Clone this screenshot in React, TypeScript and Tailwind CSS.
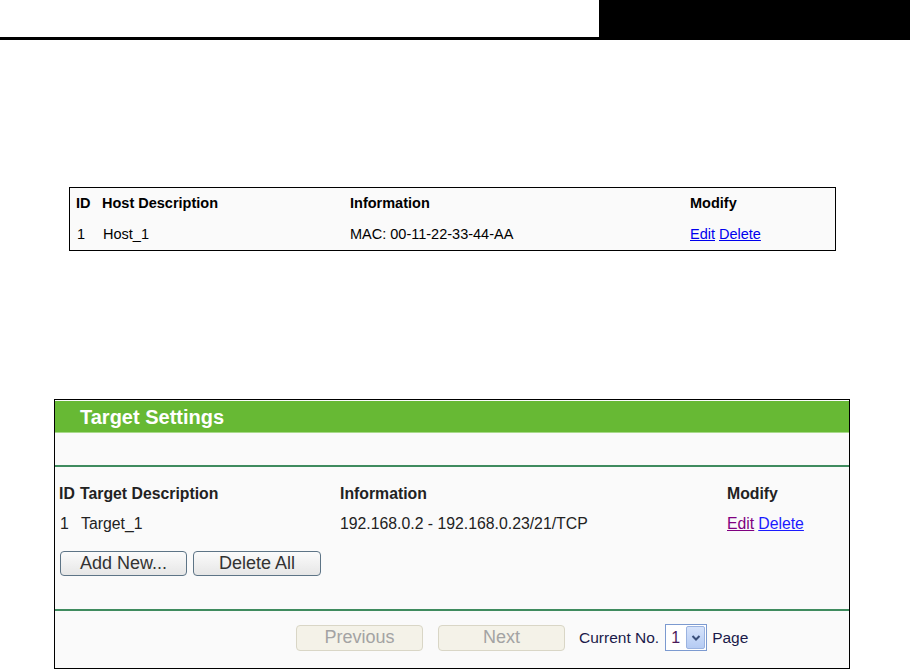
import React from "react";

const font = { fontFamily: '"Liberation Sans", Arial, sans-serif' };

function Chevron() {
  return (
    <svg width="10" height="8" viewBox="0 0 10 8">
      <path d="M1.5 2 L5 5.5 L8.5 2" fill="none" stroke="#3a4f7a" strokeWidth="2" />
    </svg>
  );
}

export default function App() {
  return (
    <div className="w-[910px] h-[671px] bg-white overflow-hidden text-black" style={font}>
      {/* top header bar */}
      <div className="flex h-[40px]">
        <div className="flex-1 border-b-[3px] border-black"></div>
        <div className="w-[311px] bg-black"></div>
      </div>

      {/* host table */}
      <div className="ml-[69px] mt-[147px] w-[767px] h-[64px] border border-black bg-[#fafafa] pl-[6px] text-[14.5px]">
        <div className="grid grid-cols-[26px_248px_340px_1fr] h-[31px] items-center font-bold">
          <div>ID</div>
          <div>Host Description</div>
          <div>Information</div>
          <div>Modify</div>
        </div>
        <div className="grid grid-cols-[26px_248px_340px_1fr] h-[31px] items-center">
          <div className="pl-px">1</div>
          <div className="pl-px">Host_1</div>
          <div>MAC: 00-11-22-33-44-AA</div>
          <div className="flex gap-[4px]">
            <span className="text-[#0000ee] underline">Edit</span>
            <span className="text-[#0000ee] underline">Delete</span>
          </div>
        </div>
      </div>

      {/* target settings panel */}
      <div className="ml-[54px] mt-[148px] w-[796px] h-[270px] border border-black bg-[#fafafa] flex flex-col">
        <div className="mt-px h-[32px] bg-[#67b934] border-b border-[#a8d98a] flex items-center pl-[25px] pt-[1px] text-white font-bold text-[20px]">
          Target Settings
        </div>
        <div className="h-[34px] border-b-2 border-[#3f8b5e]"></div>
        <div className="pl-[4px] pt-[12px] text-[15.8px] text-[#222]">
          <div className="grid grid-cols-[21px_260px_387px_1fr] h-[30px] items-center font-bold">
            <div>ID</div>
            <div>Target Description</div>
            <div>Information</div>
            <div>Modify</div>
          </div>
          <div className="grid grid-cols-[21px_260px_387px_1fr] h-[30px] items-center">
            <div className="pl-px">1</div>
            <div className="pl-px">Target_1</div>
            <div>192.168.0.2 - 192.168.0.23/21/TCP</div>
            <div className="flex gap-[4px]">
              <span className="text-[#800080] underline">Edit</span>
              <span className="text-[#1a1aff] underline">Delete</span>
            </div>
          </div>
          <div className="flex gap-[6px] mt-[12px] pl-[1px] text-[18px]">
            <div className="w-[127px] h-[25px] rounded-[4px] border border-[#5d7486] bg-gradient-to-b from-[#fbfbfb] to-[#e6e6e6] flex items-center justify-center text-[#333]">
              Add New...
            </div>
            <div className="w-[128px] h-[25px] rounded-[4px] border border-[#5d7486] bg-gradient-to-b from-[#fbfbfb] to-[#e6e6e6] flex items-center justify-center text-[#333]">
              Delete All
            </div>
          </div>
        </div>
        <div className="mt-[33px] border-b-2 border-[#3f8b5e]"></div>
        <div className="flex items-center pl-[241px] pt-[13px] text-[15.5px] text-[#222]">
          <div className="w-[127px] h-[26px] rounded-[4px] border border-[#d9d6c6] bg-[#f4f2e8] flex items-center justify-center text-[#a3a3a3] text-[18px]">
            Previous
          </div>
          <div className="ml-[15px] w-[127px] h-[26px] rounded-[4px] border border-[#d9d6c6] bg-[#f4f2e8] flex items-center justify-center text-[#a3a3a3] text-[18px]">
            Next
          </div>
          <div className="ml-[14px] text-[#1a1a4a]">Current No.</div>
          <div className="ml-[6px] w-[42px] h-[27px] border border-[#7c9ad0] bg-white flex items-center">
            <span className="pl-[5px] w-[20px] text-[#4a1a5a] text-[16px]">1</span>
            <div className="ml-auto mr-[1px] w-[19px] h-[23px] bg-gradient-to-b from-[#d6e3fb] to-[#b5cbf3] border border-[#9bb3e0] rounded-[2px] flex items-center justify-center">
              <Chevron />
            </div>
          </div>
          <div className="ml-[5px] text-[#1a1a4a]">Page</div>
        </div>
      </div>
    </div>
  );
}
